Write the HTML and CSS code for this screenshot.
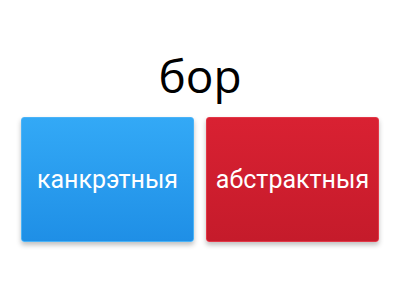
FILE: index.html
```html
<!DOCTYPE html>
<html lang="be">
<head>
    <meta charset="UTF-8">
    <title>бор</title>
    <link rel="stylesheet" href="styles.css">
</head>
<body>
    <div class="quiz">
        <h1 class="question">бор</h1>

        <div class="answers">
            <div class="answer answer-blue">канкрэтныя</div>
            <div class="answer answer-red">абстрактныя</div>
        </div>
    </div>
</body>
</html>
```

FILE: styles.css
```css
body {
    margin: 0;
    background-color: #ffffff;
    font-family: Roboto, 'Noto Sans', sans-serif;
}

.quiz {
    width: 400px;
    height: 300px;
    padding: 44px 21px 0;
    box-sizing: border-box;
}

.question {
    margin: 0 0 10px;
    font-family: 'Open Sans', 'Noto Sans', sans-serif;
    font-weight: 400;
    font-size: 46px;
    line-height: 63px;
    text-align: center;
    color: #000000;
}

.answers {
    display: flex;
    gap: 12px;
}

.answer {
    flex: 1;
    height: 123px;
    display: flex;
    justify-content: center;
    align-items: center;
    border-radius: 3px;
    color: #ffffff;
    font-size: 25px;
    box-shadow: 0 3px 5px rgba(0, 0, 0, 0.25);
}

.answer-blue {
    background: linear-gradient(to bottom, #33a9f6, #1f8fe6);
    border: 1px solid #4ab3f7; /* lighter rim */
}

.answer-red {
    background: linear-gradient(to bottom, #d92132, #c51b2b);
    border: 1px solid #e23747;
}
```
